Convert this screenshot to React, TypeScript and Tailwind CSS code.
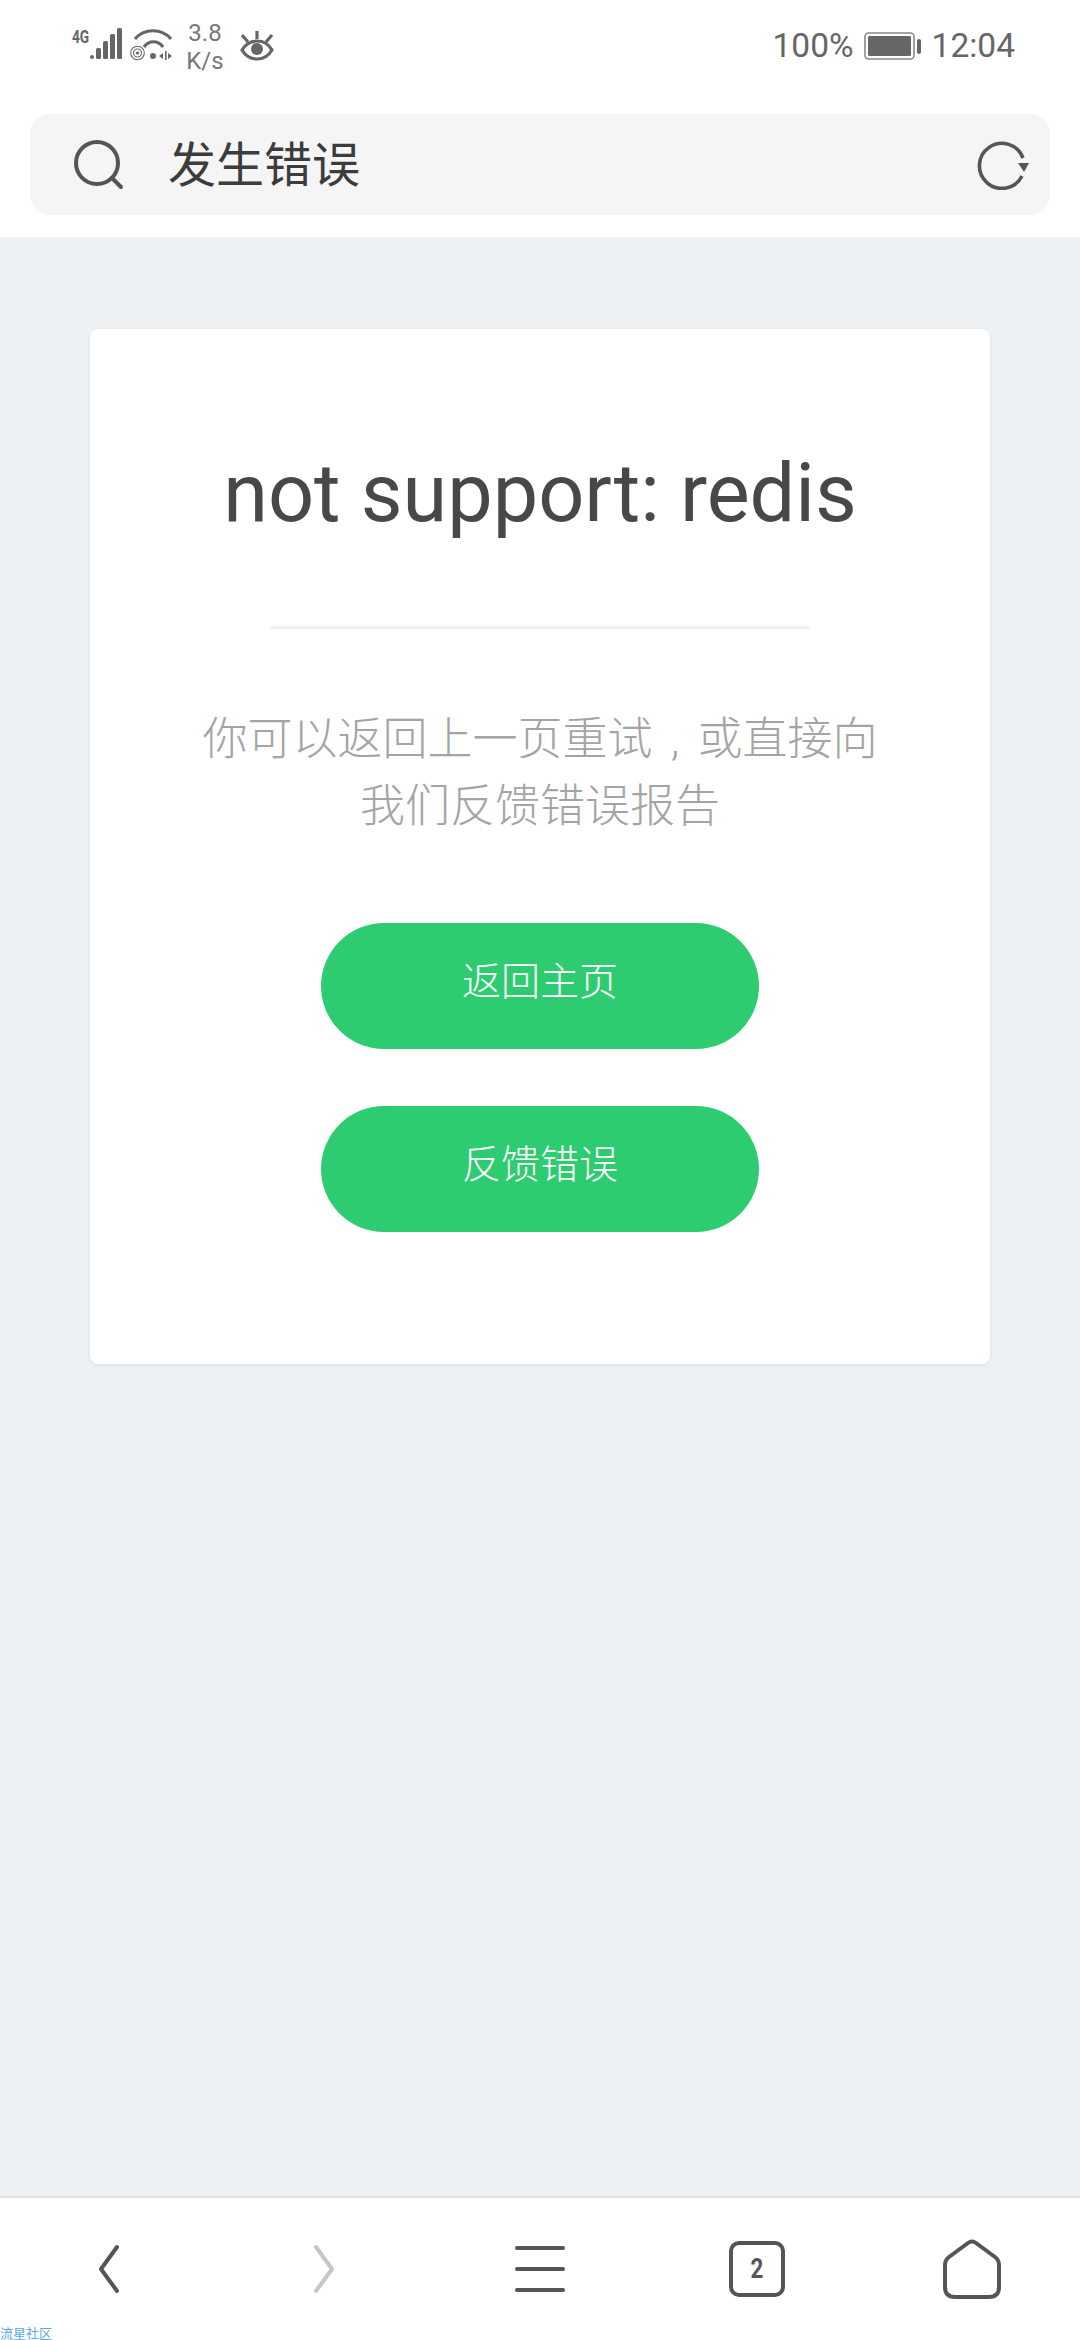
import React from 'react';

const CJK = "font-['Roboto','Noto_Sans_CJK_SC',sans-serif]";

// cellular bars with the 4G tag
const SignalIcon = () => (
  <div className="flex items-start">
    <span className="block w-[16px] origin-left scale-x-[0.72] font-['Roboto'] text-[19px] leading-[17px] font-bold whitespace-nowrap text-[#666]">4G</span>
    <svg width="34" height="32" viewBox="0 0 34 32" fill="#666">
      <rect x="2" y="27" width="4" height="4" rx="2" />
      <rect x="8" y="20" width="5" height="11" rx="1.5" />
      <rect x="15" y="13" width="5" height="18" rx="1.5" />
      <rect x="22" y="6" width="5" height="25" rx="1.5" />
      <rect x="29" y="0" width="5" height="31" rx="1.5" />
    </svg>
  </div>
);

const WifiIcon = () => (
  <svg width="42" height="32" viewBox="0 0 42 32" fill="none" stroke="#666">
    <path d="M5 10C14 -1 32 -1 41 10" strokeWidth="3.2" />
    <path d="M14 18C19 11 28 11 33 18" strokeWidth="3.2" />
    <circle cx="7.5" cy="24" r="6.8" strokeWidth="1.1" />
    <circle cx="7.5" cy="24" r="4" strokeWidth="1.1" />
    <circle cx="7.5" cy="24" r="1.6" fill="#666" stroke="none" />
    <circle cx="23" cy="27" r="3" fill="#666" stroke="none" />
    <path d="M29 27l4-3v6zM35 22h1.6v9H35zM38 24l4 3-4 3z" fill="#666" stroke="none" />
  </svg>
);

const EyeIcon = () => (
  <svg width="34" height="30" viewBox="0 0 34 30" fill="none" stroke="#666" strokeWidth="3.2">
    <path d="M2 19C9 7 25 7 32 19C25 31 9 31 2 19Z" />
    <circle cx="17" cy="18" r="6" fill="#666" stroke="none" />
    <path d="M17 0v8M2 4l6 7M32 4l-6 7" />
  </svg>
);

const BatteryIcon = () => (
  <svg width="58" height="28" viewBox="0 0 58 28">
    <rect x="1" y="1" width="49" height="26" rx="3.5" fill="none" stroke="#888" strokeWidth="1.6" />
    <rect x="4" y="4" width="43" height="20" rx="1.5" fill="#666" />
    <rect x="53" y="7" width="4" height="15" rx="2" fill="#666" />
  </svg>
);

const SearchIcon = () => (
  <svg width="50" height="50" viewBox="0 0 50 50" fill="none" stroke="#555" strokeWidth="4">
    <circle cx="23" cy="23" r="21" />
    <path d="M38 38l9 9" strokeLinecap="round" />
  </svg>
);

const RefreshIcon = () => (
  <svg width="54" height="50" viewBox="0 0 54 50" fill="none">
    <path d="M46 36A22.5 22.5 0 1 1 47 18" stroke="#555" strokeWidth="3.6" />
    <path d="M42 23H53L48 32Z" fill="#555" />
  </svg>
);

const BackIcon = ({ color, flip }: { color: string; flip?: boolean }) => (
  <svg width="22" height="50" viewBox="0 0 22 50" fill="none" stroke={color} strokeWidth="4" strokeLinecap="round" strokeLinejoin="round" className={flip ? 'scale-x-[-1]' : ''}>
    <path d="M19 3L3 25L19 47" />
  </svg>
);

const MenuIcon = () => (
  <svg width="50" height="48" viewBox="0 0 50 48" stroke="#555" strokeWidth="4" strokeLinecap="round">
    <path d="M2 3H48M2 24H48M2 45H48" />
  </svg>
);

const HomeIcon = () => (
  <svg width="58" height="60" viewBox="0 0 58 60" fill="none" stroke="#555" strokeWidth="4" strokeLinejoin="round">
    <path d="M25 4Q29 1 33 4L52 18Q56 21 56 26V48Q56 58 46 58H12Q2 58 2 48V26Q2 21 6 18Z" />
  </svg>
);

const ActionButton = ({ label }: { label: string }) => (
  <button className={`h-[126px] w-[438px] rounded-full bg-[#2ecc71] pb-[8px] text-[39px] font-light text-white ${CJK}`}>
    {label}
  </button>
);

export default function App() {
  return (
    <div className={`relative flex h-[2340px] w-[1080px] flex-col overflow-hidden bg-white ${CJK}`}>
      {/* status bar */}
      <div className="flex h-[92px] items-start justify-between pt-[28px] pr-[65px] pl-[72px] text-[#666]">
        <div className="flex items-start">
          <SignalIcon />
          <div className="mt-[1px] ml-[8px]"><WifiIcon /></div>
          <div className="mt-[-9px] ml-[13px] flex w-[40px] flex-col items-center font-['Roboto'] text-[24px] leading-[28px] text-[#777]">
            <span>3.8</span>
            <span>K/s</span>
          </div>
          <div className="mt-[3px] ml-[15px]"><EyeIcon /></div>
        </div>
        <div className="flex items-center font-['Roboto'] text-[33.5px] leading-[36px] text-[#666]">
          <span>100%</span>
          <div className="mr-[10px] ml-[10px]"><BatteryIcon /></div>
          <span>12:04</span>
        </div>
      </div>

      {/* address bar */}
      <div className="h-[148px] border-b-[3px] border-[#eef0f2] px-[30px] pt-[22px]">
        <div className="flex h-[101px] items-center rounded-[20px] bg-[#f5f5f5] pr-[20px] pl-[44px]">
          <SearchIcon />
          <span className="ml-[44px] flex-1 pt-[3px] text-[48px] leading-none font-normal text-[#3c3c3c]">发生错误</span>
          <RefreshIcon />
        </div>
      </div>

      {/* error card */}
      <main className="flex-1 bg-[#edf1f4] px-[90px] pt-[89px]">
        <div className="flex h-[1035px] flex-col items-center rounded-[8px] bg-white pt-[123px] shadow-[0_1px_4px_rgba(0,0,0,0.08)]">
          <h1 className="font-['Roboto'] text-[81px] leading-[84px] font-normal whitespace-nowrap text-[#484848]">not support: redis</h1>
          <div className="mt-[90px] h-[3px] w-[540px] bg-[#eef0f2]" />
          <p className="mt-[77px] w-[680px] text-center text-[45px] leading-[67px] font-light text-[#a4a4a4]">
            你可以返回上一页重试<span className="inline-block w-[45px] text-center">,</span>或直接向<br />我们反馈错误报告
          </p>
          <div className="mt-[83px] flex flex-col gap-[57px]">
            <ActionButton label="返回主页" />
            <ActionButton label="反馈错误" />
          </div>
        </div>
      </main>

      {/* browser toolbar */}
      <nav className="flex h-[144px] items-start border-t-[2px] border-[#dfe3e8] bg-white pt-[41px]">
        <div className="flex h-[60px] w-full items-center">
          <div className="ml-[98px]"><BackIcon color="#555" /></div>
          <div className="ml-[193px]"><BackIcon color="#c6c6c6" flip /></div>
          <div className="ml-[180px]"><MenuIcon /></div>
          <div className="ml-[164px] flex h-[56px] w-[56px] items-center justify-center rounded-[10px] border-[4px] border-[#555]">
            <span className="scale-x-[0.8] font-['Roboto'] text-[28px] leading-none font-bold text-[#555]">2</span>
          </div>
          <div className="ml-[158px]"><HomeIcon /></div>
        </div>
      </nav>
      <span className="absolute bottom-0 left-0 text-[13px] leading-[13px] text-[#5aa8e8]">流星社区</span>
    </div>
  );
}
